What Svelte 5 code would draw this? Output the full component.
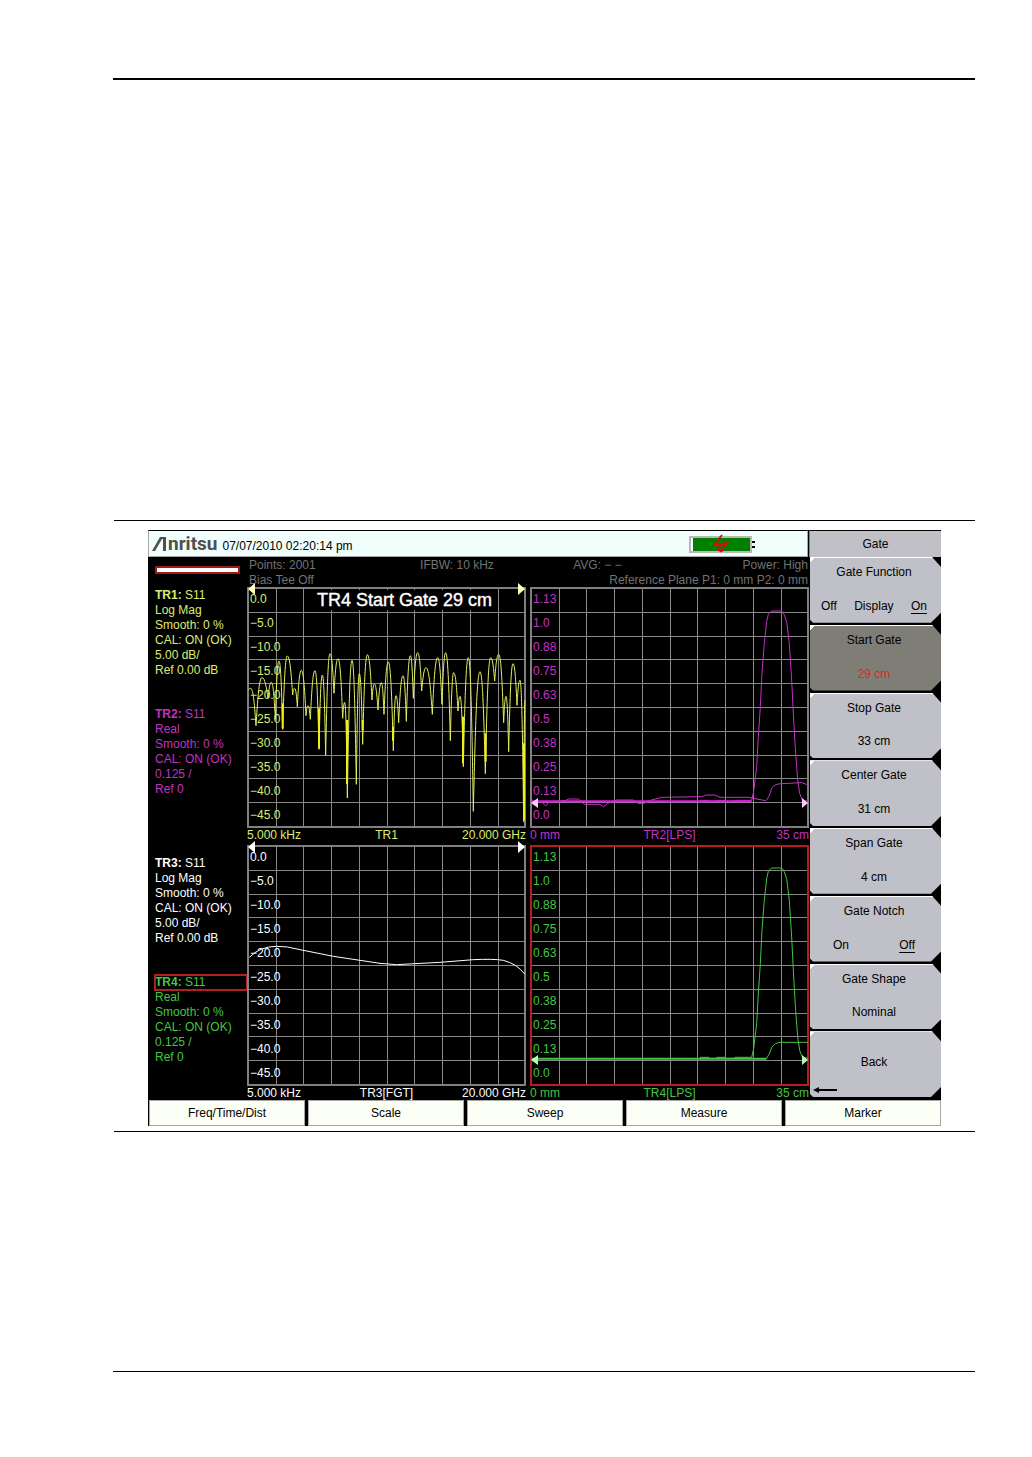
<script>
  const groups = [
    { id: 'TR1', tone: 'yellow', lines: ['Log Mag', 'Smooth: 0 %', 'CAL: ON (OK)', '5.00 dB/', 'Ref 0.00 dB'] },
    { id: 'TR2', tone: 'magenta', lines: ['Real', 'Smooth: 0 %', 'CAL: ON (OK)', '0.125 /', 'Ref 0'] },
    { id: 'TR3', tone: 'white', lines: ['Log Mag', 'Smooth: 0 %', 'CAL: ON (OK)', '5.00 dB/', 'Ref 0.00 dB'] },
    { id: 'TR4', tone: 'green', active: true, lines: ['Real', 'Smooth: 0 %', 'CAL: ON (OK)', '0.125 /', 'Ref 0'] },
  ];

  const db = ['0.0', '−5.0', '−10.0', '−15.0', '−20.0', '−25.0', '−30.0', '−35.0', '−40.0', '−45.0'];
  const real = ['1.13', '1.0', '0.88', '0.75', '0.63', '0.5', '0.38', '0.25', '0.13', '0.0'];

  // Alternating crests and nulls of the reflection trace, in thirds of a plot unit.
  const ripple = [
    [25, 330], [32, 325], [48, 437], [66, 293], [84, 355], [94, 307], [106, 418], [117, 243], [128, 448],
    [142, 228], [158, 345], [164, 325], [172, 380], [184, 271], [198, 407], [204, 377], [211, 418],
    [225, 272], [237, 508], [247, 285], [257, 526], [270, 221], [282, 340], [294, 236], [308, 415],
    [314, 367], [322, 654], [336, 241], [349, 613], [358, 281], [368, 493], [382, 224], [396, 360],
    [403, 312], [414, 390], [424, 308], [432, 403], [445, 246], [460, 512], [468, 347], [476, 428],
    [489, 287], [499, 424], [511, 227], [520, 355], [533, 218], [545, 333], [558, 263], [577, 403],
    [593, 233], [606, 373], [617, 218], [631, 482], [641, 278], [654, 393], [660, 349], [670, 560],
    [685, 233], [700, 694], [720, 275], [736, 581], [752, 233], [764, 303], [776, 223], [791, 428],
    [798, 349], [806, 515], [819, 251], [831, 376], [840, 301], [851, 725], [855, 360],
  ];

  function ripplePath(points) {
    let d = `M${points[0]}`;
    for (let i = 1; i < points.length; i++) {
      const [x0, y0] = points[i - 1];
      const [x1, y1] = points[i];
      const dx = x1 - x0;
      const mid = (y0 + y1) / 2;
      d += y1 < y0
        ? `C${x0 + dx * 0.25},${mid} ${x0 + dx * 0.5},${y1} ${x1},${y1}`
        : `C${x0 + dx * 0.5},${y0} ${x0 + dx * 0.75},${mid} ${x1},${y1}`;
    }
    return d;
  }

  const gatePeak =
    'M525,661H552V664H575V661H600V664H630V661H680L686,635L695,560L700,470L706,380L711,280L717,200L725,125L730,103L737,95L741,93H768L772,95L777,103L785,125L793,190L800,300L806,420L812,520L818,600L824,640L832,661L850,664';

  const plots = [
    {
      id: 'TR1', tone: 'yellow', labels: db, left: '5.000 kHz', name: 'TR1', right: '20.000 GHz', title: 'TR4 Start Gate 29 cm',
      shift: 'translate(-7 -7) scale(.33333)', thin: [ripplePath(ripple)],
      thick: ['M128,370V445', 'M237,385V505', 'M321,420V612', 'M368,420V450', 'M459,440V482', 'M669,410V550', 'M737,460V545', 'M852,490V720'],
      marks: 'M1,2L8,-4V8ZM278,2L271,-4V8Z',
    },
    {
      id: 'TR2', tone: 'magenta', labels: real, left: '0 mm', name: 'TR2[LPS]', right: '35 cm',
      shift: 'translate(-5 -7) scale(.33333)',
      thin: [gatePeak, 'M20,664L50,666L62,678L72,666L120,662L130,657H160L178,673H225L236,681L248,670L275,660H325L340,671H356L372,662L410,652L530,650L545,645H568L585,652H670L690,656L722,662Q732,655 740,625Q748,611 770,611L830,608L850,615'],
      thick: ['M20,664H680'],
      marks: 'M1,216L8,211V221ZM278,216L272,211V221Z',
    },
    {
      id: 'TR3', tone: 'white', labels: db, left: '5.000 kHz', name: 'TR3[FGT]', right: '20.000 GHz',
      shift: 'translate(-107 -5) scale(.33333)',
      thin: ['M328,352Q360,319 410,319Q440,318 480,329L580,349L660,361L720,370L770,374L900,367L1000,359Q1060,356 1090,361Q1130,371 1154,402'],
      thick: [],
      marks: 'M1,2L8,-4V8ZM278,2L271,-4V8Z',
    },
    {
      id: 'TR4', tone: 'green', active: true, labels: real, left: '0 mm', name: 'TR4[LPS]', right: '35 cm',
      shift: 'translate(-5 -8) scale(.33333)',
      thin: [gatePeak, 'M680,665H724Q732,656 740,632Q748,616 770,616H850'],
      thick: ['M20,665H724'],
      marks: 'M1,215L8,210V220ZM278,215L272,210V220Z',
    },
  ];

  const cols = [29, 56, 84, 112, 140, 167, 195, 223, 251];
  const rows = [25, 49, 72, 96, 120, 144, 168, 191, 215];

  const menu = [
    { label: 'Gate Function', options: ['Off', 'Display', 'On'], on: 'On' },
    { label: 'Start Gate', value: '29 cm', selected: true },
    { label: 'Stop Gate', value: '33 cm' },
    { label: 'Center Gate', value: '31 cm' },
    { label: 'Span Gate', value: '4 cm' },
    { label: 'Gate Notch', options: ['On', 'Off'], on: 'Off' },
    { label: 'Gate Shape', value: 'Nominal' },
    { label: 'Back', back: true },
  ];

  const tabs = ['Freq/Time/Dist', 'Scale', 'Sweep', 'Measure', 'Marker'];
</script>

<div class="page">
  <header class="page-head"></header>
  <figure>
    <main class="screen">
      <div class="topbar">
        <div class="logo">
          <svg width="15" height="14" viewBox="0 0 15 14" aria-hidden="true">
            <path d="M0 14L8 0H14V14H11V2H10L3 14Z" />
          </svg>
          <span>nritsu</span>
        </div>
        <time>07/07/2010 02:20:14 pm</time>
        <svg class="battery" width="68" height="20" viewBox="0 0 68 20" role="img" aria-label="Battery charging">
          <rect x="1" y="3" width="61" height="15" fill="#fff" stroke="#b8b8b8" stroke-width="2" />
          <rect x="4" y="4" width="57" height="13" fill="#008000" />
          <path d="M63 7h3v2h-3zM63 12h3v2h-3z" fill="#000" />
          <path d="M33 1L25 11L38 9L31 18M32 10L29 16L34 17" fill="none" stroke="#d01010" stroke-width="2" />
        </svg>
      </div>

      <div class="work">
        <aside>
          <div class="progress"></div>
          {#each groups as g}
            <section class="trace {g.tone}">
              <div class="trace-name" class:active={g.active}><b>{g.id}:</b> S11</div>
              {#each g.lines as line}<div>{line}</div>{/each}
            </section>
          {/each}
        </aside>

        <div class="graphs">
          <div class="info">
            <span>Points: 2001</span><span>IFBW: 10 kHz</span><span>AVG: − −</span><span class="end">Power: High</span>
            <span class="half">Bias Tee Off</span><span class="half end">Reference Plane P1: 0 mm P2: 0 mm</span>
          </div>
          {#each plots as p}
            <section class="plot {p.tone}">
              <div class="area">
                <svg viewBox="0 0 279 241" preserveAspectRatio="none" aria-label={p.name}>
                  <g class="grid">
                    {#each cols as x}<path d="M{x + 0.5} 1V240" />{/each}
                    {#each rows as y}<path d="M1 {y + 0.5}H278" />{/each}
                  </g>
                  <rect class="frame" class:active={p.active} x="1" y="1" width="277" height="239" />
                  <g transform={p.shift}>
                    {#each p.thin as d}<path class="line" {d} />{/each}
                    {#each p.thick as d}<path class="line bold" {d} />{/each}
                  </g>
                  <path class="marks" d={p.marks} />
                </svg>
                <div class="scale">
                  {#each p.labels as l}<span>{l}</span>{/each}
                </div>
                {#if p.title}<h1>{p.title}</h1>{/if}
              </div>
              <div class="range"><span>{p.left}</span><span>{p.name}</span><span class="end">{p.right}</span></div>
            </section>
          {/each}
        </div>
      </div>

      <nav class="menu" aria-label="Gate">
        <h2>Gate</h2>
        {#each menu as m}
          <button class:selected={m.selected} class:back={m.back}>
            <span class="label">{m.label}</span>
            {#if m.options}
              <span class="options" class:pair={m.options.length === 2}>
                {#each m.options as o}<span class:on={o === m.on}>{o}</span>{/each}
              </span>
            {:else if m.value}
              <span class="value">{m.value}</span>
            {/if}
            {#if m.back}
              <svg class="arrow" width="24" height="8" viewBox="0 0 24 8" aria-hidden="true">
                <path d="M0 4L6 1V7ZM6 3H24V5H6Z" />
              </svg>
            {/if}
          </button>
        {/each}
      </nav>

      <nav class="tabs" aria-label="Main menu">
        {#each tabs as t}<button>{t}</button>{/each}
      </nav>
    </main>
  </figure>
  <footer></footer>
</div>

<style>
  :global(body) {
    background: #fff;
  }
  .page {
    padding: 78px 57px 85px 113px;
    font: 12px/15px 'Liberation Sans', Arial, sans-serif;
    color: #000;
  }
  .page-head {
    border-top: 2px solid #000;
    padding-bottom: 440px;
  }
  figure {
    margin: 0 0 239px 1px;
    padding: 9px 34px 5px;
    border-top: 1px solid #000;
    border-bottom: 1px solid #000;
  }
  footer {
    border-top: 1px solid #000;
  }
  .screen {
    display: grid;
    grid-template-columns: minmax(0, 1fr) 132px;
    grid-template-rows: 27px 542px 27px;
    background: #000;
  }
  .topbar {
    display: flex;
    align-items: center;
    background: #f0fffb;
    border: 1px solid #a8a8a8;
    border-top-color: #000;
    margin-right: 1px;
    padding: 0 50px 0 3px;
  }
  .logo {
    display: flex;
    align-items: center;
    gap: 1px;
    color: #50504e;
    fill: #50504e;
    font: bold 19px/24px Roboto, 'Liberation Sans', sans-serif;
  }
  time {
    margin: 6px auto 0 5px;
  }
  .work {
    grid-column: 1;
    display: grid;
    grid-template-columns: 99px minmax(0, 1fr);
  }
  aside {
    padding: 9px 0 0 7px;
  }
  .progress {
    box-sizing: border-box;
    height: 8px;
    margin: 0 7px 14px 0;
    background: #fff;
    border: 2px solid #a01818;
  }
  .trace {
    margin-bottom: 29px;
  }
  .trace:nth-of-type(2) {
    margin-bottom: 59px;
  }
  .trace-name.active {
    outline: 2px solid #b02020;
    outline-offset: -1px;
  }
  .yellow {
    color: #dcec70;
  }
  .magenta {
    color: #c232c2;
  }
  .white {
    color: #fff;
  }
  .green {
    color: #44c644;
  }
  .graphs {
    display: grid;
    grid-template-columns: 1fr 1fr;
    grid-template-rows: 27px 255px 254px;
    gap: 3px 4px;
  }
  .info {
    grid-column: 1 / -1;
    display: grid;
    grid-template-columns: 172fr 154fr 117fr 119fr;
    padding: 1px 1px 0 2px;
    color: #727272;
  }
  .half {
    grid-column: span 2;
  }
  .end {
    text-align: right;
  }
  .plot {
    display: flex;
    flex-direction: column;
  }
  .area {
    flex: 1;
    position: relative;
    display: grid;
  }
  .area svg {
    grid-area: 1 / 1;
    width: 100%;
    height: 100%;
    overflow: visible;
  }
  .area path,
  .area rect {
    fill: none;
    vector-effect: non-scaling-stroke;
  }
  .grid path {
    stroke: #888;
    stroke-width: 1px;
    shape-rendering: crispEdges;
  }
  .area .frame {
    stroke: #808080;
    stroke-width: 2px;
  }
  .area .frame.active {
    stroke: #b81c20;
  }
  .line {
    stroke: currentColor;
    stroke-width: 1px;
  }
  .yellow .line {
    stroke: #e4f060;
  }
  .line.bold {
    stroke-width: 2px;
  }
  .yellow .line.bold {
    stroke: #f0f018;
  }
  .magenta .line.bold {
    stroke: #e018e0;
  }
  .area .marks {
    fill: #ffffc0;
    stroke: none;
  }
  .white .marks {
    fill: #fff;
  }
  .magenta .marks {
    fill: #ffc8ff;
  }
  .green .marks {
    fill: #b0ffb0;
  }
  .scale {
    grid-area: 1 / 1;
    display: grid;
    grid-template-rows: repeat(10, 1fr);
    align-items: center;
    padding-left: 3px;
    z-index: 1;
  }
  h1 {
    position: absolute;
    top: 3px;
    left: 24%;
    z-index: 2;
    margin: 0;
    padding: 0 3px;
    background: #000;
    color: #fff;
    white-space: nowrap;
    font: 18px/20px 'Liberation Sans', Arial, sans-serif;
    -webkit-text-stroke: 0.4px #fff;
  }
  .range {
    display: grid;
    grid-template-columns: 1fr auto 1fr;
    line-height: 14px;
  }
  .menu {
    grid-column: 2;
    grid-row: 1 / 3;
    display: grid;
    grid-template-rows: 27px repeat(8, minmax(0, 1fr));
  }
  h2 {
    margin: 0;
    background: #c0c0c6;
    border-top: 1px solid #000;
    border-left: 1px solid #808080;
    font: inherit;
    line-height: 26px;
    text-align: center;
  }
  button {
    font: inherit;
    color: inherit;
    border: 0;
    border-radius: 0;
    cursor: pointer;
  }
  .menu button {
    position: relative;
    display: flex;
    flex-direction: column;
    align-items: center;
    justify-content: space-between;
    margin: 0 0 2px 1px;
    padding: 7px 3px 9px 0;
    background: linear-gradient(135deg, #fff 3px, transparent 3px), #c0c0c8;
    border-top: 1px solid #fff;
    clip-path: polygon(0 0, calc(100% - 9px) 0, 100% 10px, 100% calc(100% - 10px), calc(100% - 10px) 100%, 3px 100%, 0 calc(100% - 3px));
  }
  .menu .selected {
    background: linear-gradient(135deg, #fff 3px, transparent 3px), #7e7e76;
  }
  .selected .value {
    color: #e02424;
  }
  .menu .back {
    justify-content: center;
    padding-bottom: 12px;
  }
  .options {
    box-sizing: border-box;
    width: 100%;
    display: flex;
    justify-content: space-between;
    padding: 0 11px;
  }
  .options.pair {
    padding: 0 23px;
  }
  .on {
    text-decoration: underline;
    text-underline-offset: 3px;
  }
  .arrow {
    position: absolute;
    left: 3px;
    bottom: 3px;
  }
  .tabs {
    grid-column: 1 / -1;
    display: grid;
    grid-template-columns: repeat(5, 1fr);
    column-gap: 3px;
    padding: 1px 0 0 1px;
  }
  .tabs button {
    padding: 0;
    background: #fcfff6;
    border: 1px solid #a8a8a8;
  }
</style>
